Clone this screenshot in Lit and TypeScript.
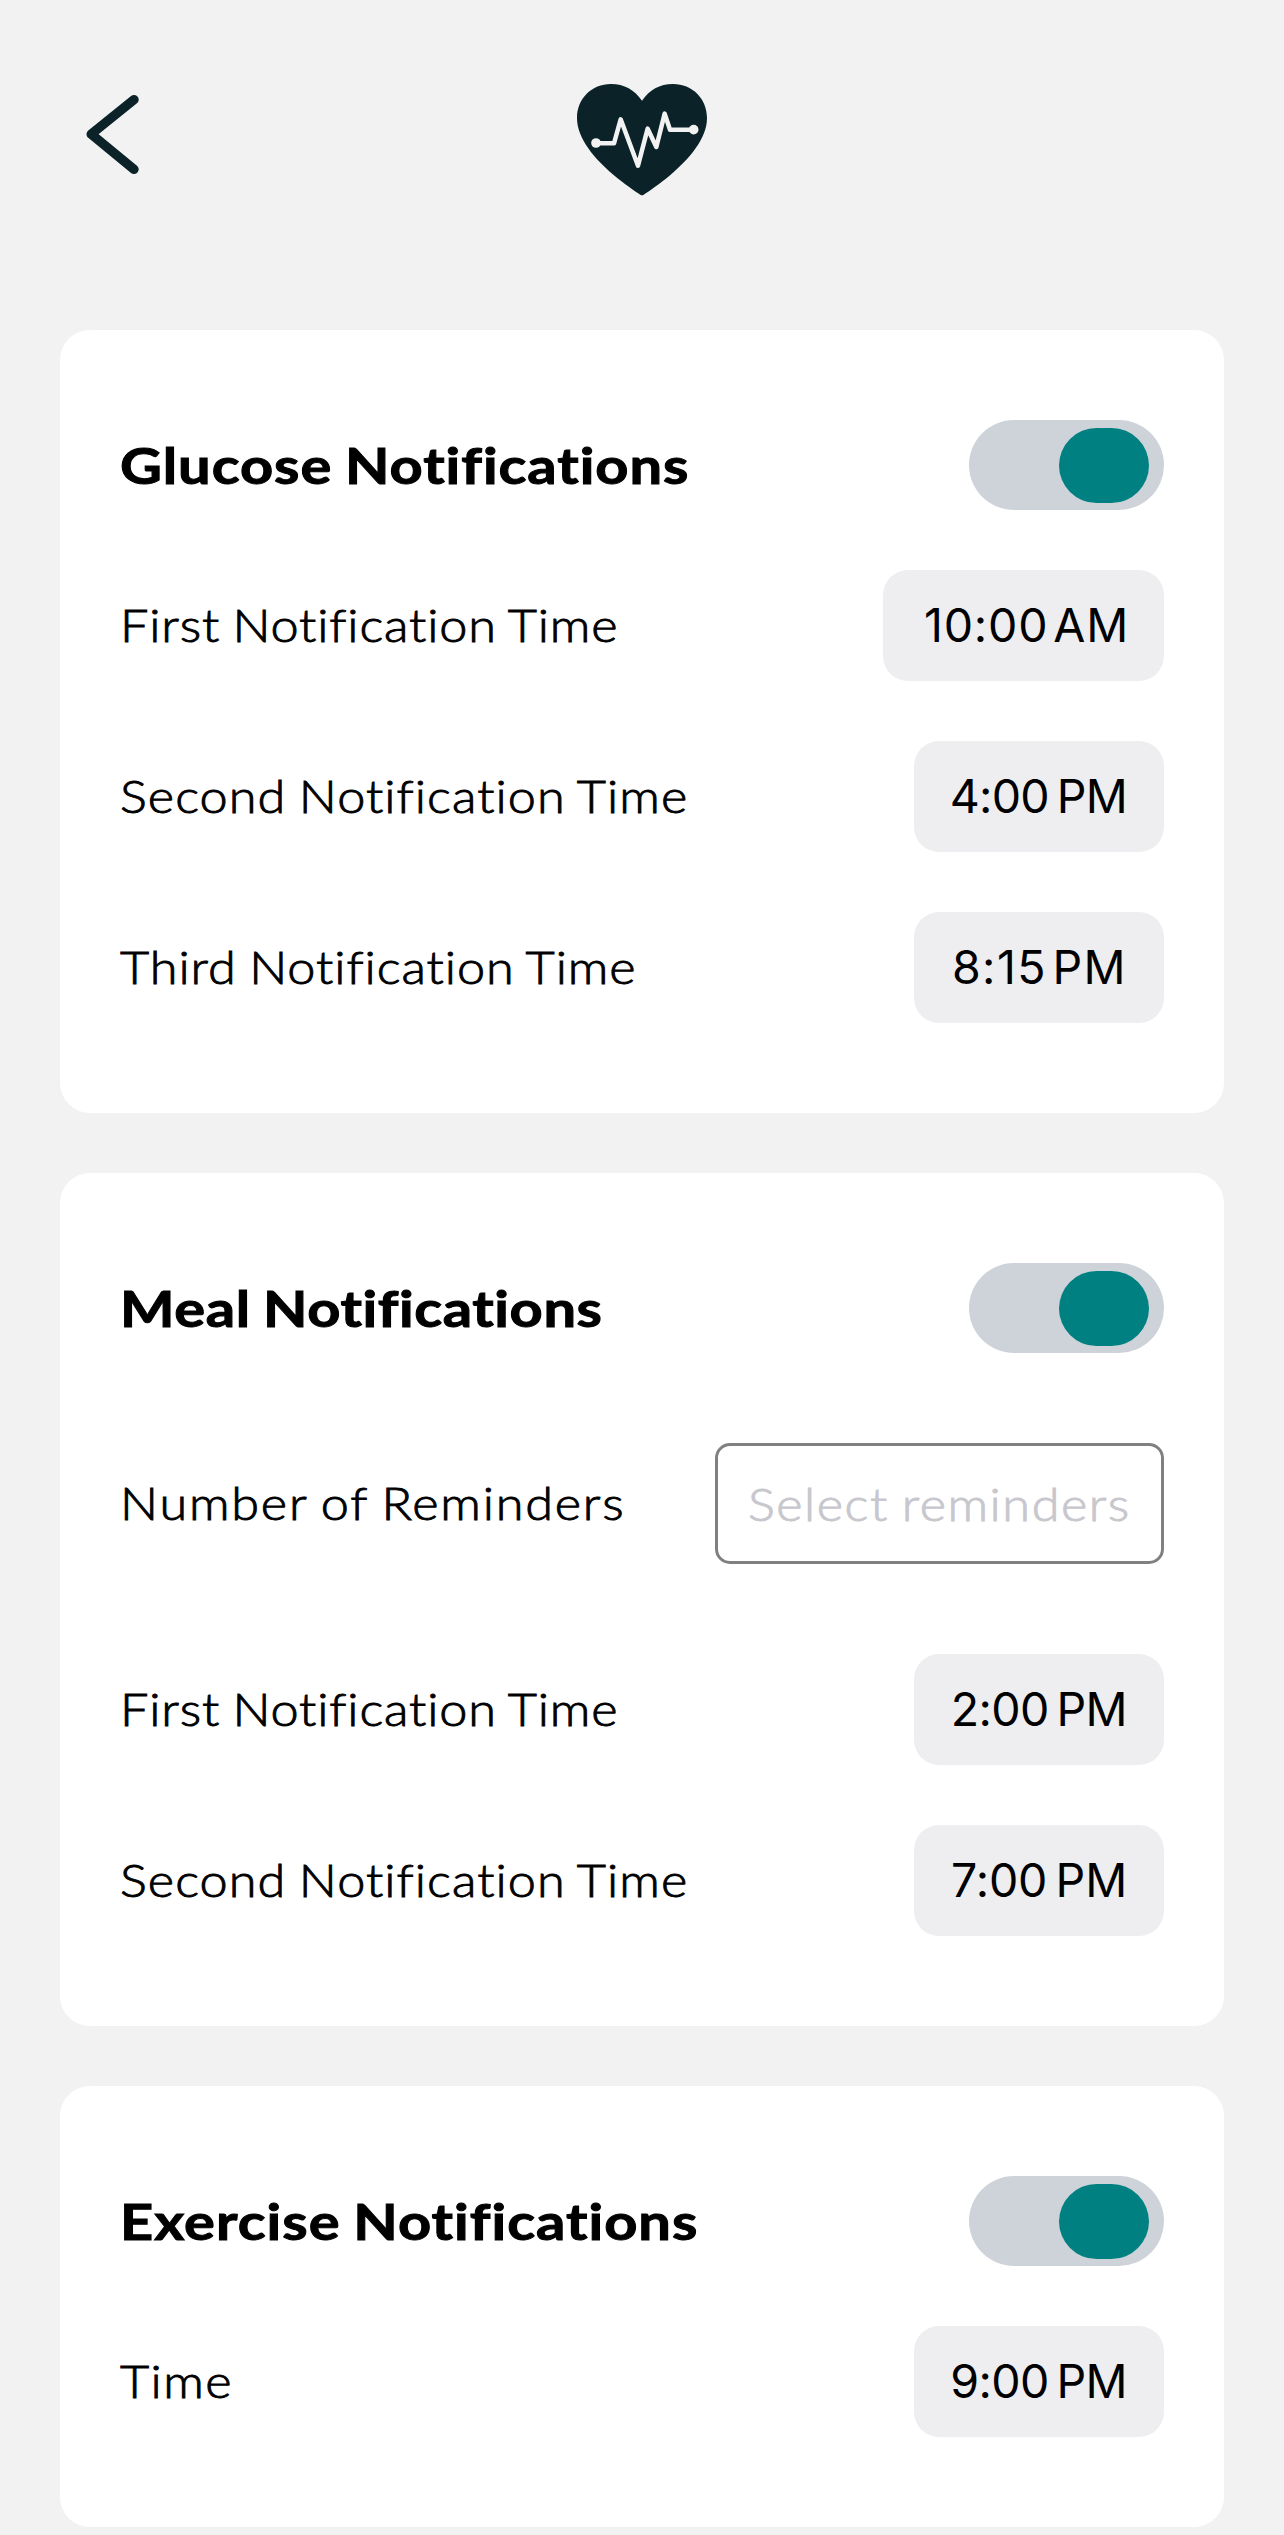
import { LitElement, html, css, svg } from "lit";
import { customElement, property } from "lit/decorators.js";
import { styleMap } from "lit/directives/style-map.js";

interface Label {
  text: string;
  /** Letter tracking in pixels. */
  track: number;
}

interface TimeRow {
  label: Label;
  time: Label;
}

interface Section {
  title: Label;
  reminders?: { label: Label; placeholder: Label };
  rows: TimeRow[];
}

const FIRST: Label = { text: "First Notification Time", track: 0.78 };
const SECOND: Label = { text: "Second Notification Time", track: 0.96 };
const THIRD: Label = { text: "Third Notification Time", track: 0.86 };

const SECTIONS: Section[] = [
  {
    title: { text: "Glucose Notifications", track: 0.82 },
    rows: [
      { label: FIRST, time: { text: "10:00\u200aAM", track: 0.8 } },
      { label: SECOND, time: { text: "4:00\u2009PM", track: -0.7 } },
      { label: THIRD, time: { text: "8:15\u200aPM", track: 1.4 } },
    ],
  },
  {
    title: { text: "Meal Notifications", track: 0.5 },
    reminders: {
      label: { text: "Number of Reminders", track: 1.6 },
      placeholder: { text: "Select reminders", track: 1.38 },
    },
    rows: [
      { label: FIRST, time: { text: "2:00\u2009PM", track: -0.6 } },
      { label: SECOND, time: { text: "7:00\u2009PM", track: -0.15 } },
    ],
  },
  {
    title: { text: "Exercise Notifications", track: 0.87 },
    rows: [{ label: { text: "Time", track: 1.3 }, time: { text: "9:00\u2009PM", track: -0.6 } }],
  },
];

const backIcon = svg`
  <path d="M48 5.7 L5.2 40.2 L48 75.3" fill="none" stroke="#0a2228" stroke-width="9.4"
    stroke-linecap="round" stroke-linejoin="round" />`;

const heartIcon = svg`
  <path fill="#0a2228" d="M246 92 C224 60 193 42 153 42 C95 42 51 86 51 144 C51 205 104 267 160 314
    C194 342 223 362 242 375 Q246 377 250 375 C269 362 298 342 332 314 C388 267 441 205 441 144
    C441 86 397 42 339 42 C299 42 268 60 246 92 Z" />
  <path fill="none" stroke="#f2f2f2" stroke-width="13.5" stroke-linecap="round" stroke-linejoin="round"
    d="M108 220 H162 L182 148 L234 287 L263 176 L289 231 L314 131 L330 179 H401" />
  <circle cx="108" cy="219" r="14.5" fill="#f2f2f2" />
  <circle cx="401" cy="179" r="14.5" fill="#f2f2f2" />`;

@customElement("app-toggle")
export class AppToggle extends LitElement {
  static styles = css`
    :host {
      display: block;
      flex: none;
    }
    .track {
      box-sizing: border-box;
      display: flex;
      justify-content: flex-end;
      width: 195px;
      height: 90px;
      padding: 8px 15px 7px;
      border-radius: 45px;
      background: #ced3da;
    }
    .knob {
      width: 90px;
      height: 75px;
      border-radius: 37.5px;
      background: #008080;
    }
  `;

  render() {
    return html`<div class="track"><div class="knob"></div></div>`;
  }
}

@customElement("notification-card")
export class NotificationCard extends LitElement {
  @property({ attribute: false }) section!: Section;

  static styles = css`
    :host {
      display: block;
    }
    .card {
      display: flex;
      flex-direction: column;
      gap: 60px;
      padding: 90px 60px;
      border-radius: 30px;
      background: #fff;
      color: #000;
    }
    .row {
      display: flex;
      align-items: center;
      justify-content: space-between;
    }
    .reminders {
      margin: 30px 0;
    }
    .text {
      font-family: Lato, "Open Sans", sans-serif;
      font-variant-ligatures: none;
      white-space: nowrap;
      word-spacing: -2px;
      transform-origin: left center;
    }
    .title {
      margin: 0;
      padding-bottom: 1px;
      font-size: 50.5px;
      line-height: 60px;
      font-weight: 700;
      -webkit-text-stroke: 1px currentColor;
      transform: scaleX(1.145);
    }
    .label {
      font-size: 45px;
      line-height: 54px;
      font-weight: 300;
      -webkit-text-stroke: 0.9px currentColor;
      padding-bottom: 2px;
      transform: scaleX(1.12);
    }
    .time {
      box-sizing: border-box;
      width: 250px;
      padding-right: 37px;
      border-radius: 25px;
      background: #eeeef0;
      font-family: Inter, Roboto, sans-serif;
      font-size: 46.5px;
      line-height: 111px;
      text-align: right;
      white-space: nowrap;
    }
    .time.wide {
      width: 281px;
      padding-right: 35px;
    }
    .select {
      box-sizing: border-box;
      display: flex;
      align-items: center;
      width: 449px;
      height: 121px;
      padding-left: 30px;
      border: 3px solid #808080;
      border-radius: 15px;
      color: #c7c7cd;
    }
    .select .label {
      padding-bottom: 0;
    }
  `;

  private label(l: Label) {
    return html`<span class="text label" style=${styleMap({ letterSpacing: `${l.track}px` })}>${l.text}</span>`;
  }

  private time(l: Label) {
    const wide = l.text.indexOf(":") > 1;
    return html`<span class=${wide ? "time wide" : "time"} style=${styleMap({ letterSpacing: `${l.track}px` })}>${l.text}</span>`;
  }

  render() {
    const { title, reminders, rows } = this.section;
    return html`
      <section class="card">
        <div class="row">
          <h2 class="text title" style=${styleMap({ letterSpacing: `${title.track}px` })}>${title.text}</h2>
          <app-toggle></app-toggle>
        </div>
        ${reminders
          ? html`<div class="row reminders">
              ${this.label(reminders.label)}
              <div class="select">${this.label(reminders.placeholder)}</div>
            </div>`
          : null}
        ${rows.map((r) => html`<div class="row">${this.label(r.label)}${this.time(r.time)}</div>`)}
      </section>
    `;
  }
}

@customElement("app-root")
export class AppRoot extends LitElement {
  static styles = css`
    :host {
      display: block;
      height: 2535px;
      overflow: hidden;
      background: #f2f2f2;
    }
    .header {
      box-sizing: border-box;
      display: grid;
      grid-template-columns: 1fr auto 1fr;
      align-items: start;
      height: 330px;
      padding: 70px 86px 0;
    }
    .back {
      display: block;
      width: 54px;
      height: 81px;
      margin-top: 24px;
    }
    .logo {
      display: block;
      width: 164px;
      height: 140px;
    }
    .cards {
      display: flex;
      flex-direction: column;
      gap: 60px;
      padding: 0 60px;
    }
  `;

  render() {
    return html`
      <header class="header">
        <svg class="back" viewBox="0 0 54 81">${backIcon}</svg>
        <svg class="logo" viewBox="0 0 492 420">${heartIcon}</svg>
      </header>
      <main class="cards">
        ${SECTIONS.map((s) => html`<notification-card .section=${s}></notification-card>`)}
      </main>
    `;
  }
}
